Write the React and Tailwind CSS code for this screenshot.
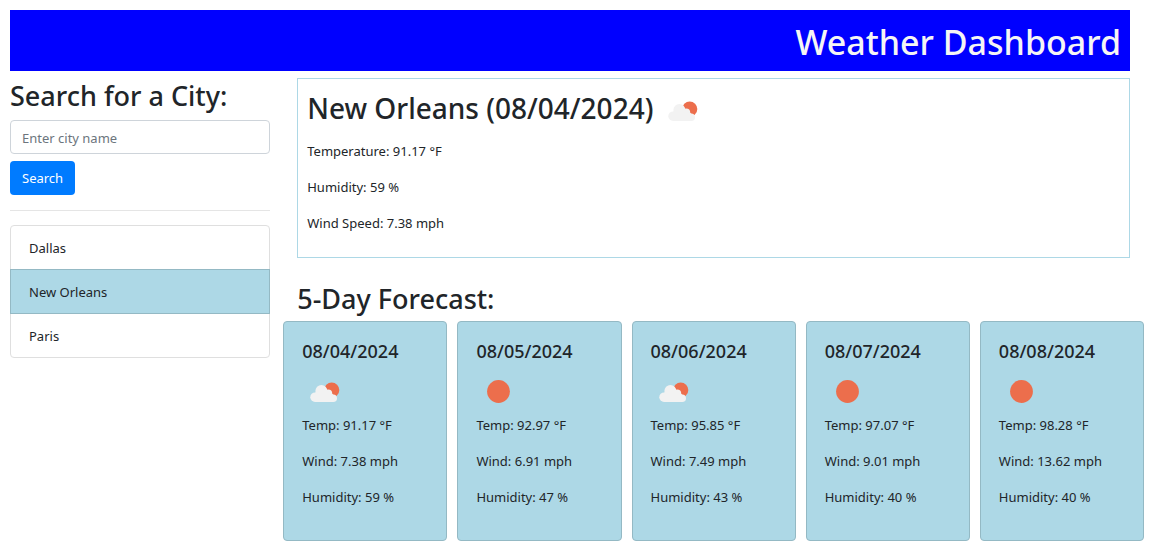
import { useState } from "react";

const cities = ["Dallas", "New Orleans", "Paris"];

const forecast = [
  { date: "08/04/2024", icon: "cloud", temp: "91.17", wind: "7.38", humidity: "59" },
  { date: "08/05/2024", icon: "sun", temp: "92.97", wind: "6.91", humidity: "47" },
  { date: "08/06/2024", icon: "cloud", temp: "95.85", wind: "7.49", humidity: "43" },
  { date: "08/07/2024", icon: "sun", temp: "97.07", wind: "9.01", humidity: "40" },
  { date: "08/08/2024", icon: "sun", temp: "98.28", wind: "13.62", humidity: "40" },
];

function WeatherIcon({ kind }) {
  return (
    <svg viewBox="0 0 44 44" className="size-11 shrink-0" aria-hidden="true">
      {kind === "sun" ? (
        <circle cx="22.5" cy="21.5" r="11.4" fill="#ec6e4c" />
      ) : (
        <>
          <circle cx="29.7" cy="20" r="7.6" fill="#ec6e4c" />
          <g fill="#f2f2f2">
            <circle cx="13.1" cy="27.2" r="4.8" />
            <circle cx="19.4" cy="21" r="6" />
            <circle cx="26.2" cy="23.6" r="4" />
            <circle cx="31.2" cy="28.2" r="3.8" />
            <path d="M13.1 22.4H28.4L31.2 24.4V32H13.1Z" />
          </g>
        </>
      )}
    </svg>
  );
}

export default function App() {
  const [city, setCity] = useState("");
  const [active, setActive] = useState("New Orleans");

  return (
    <div className="pt-[10px] pr-7 pb-[10px] pl-[10px] font-['Noto_Sans','Open_Sans',sans-serif] text-[13px] leading-[22px] text-[#212529]">
      <header className="bg-[#0000ff] px-[9px] pt-[11px] pb-[7px] text-right text-[#f5f5f5]">
        <h1 className="text-[34px] leading-[43px] font-medium">Weather Dashboard</h1>
      </header>

      <div className="grid grid-cols-[5fr_16fr] gap-[27px] pt-[7px]">
        <aside>
          <form onSubmit={(e) => e.preventDefault()}>
            <label htmlFor="city" className="block text-[27px] leading-[36px] font-medium">
              Search for a City:
            </label>
            <input
              id="city"
              type="text"
              placeholder="Enter city name"
              value={city}
              onChange={(e) => setCity(e.target.value)}
              className="mt-[6px] block h-[34px] w-full rounded-[4px] border border-[#ced4da] px-[11px] pt-[2px] placeholder:text-[#6c757d]"
            />
            <button type="submit" className="mt-[7px] block h-[34px] rounded-[4px] bg-[#007bff] px-3 text-white">
              Search
            </button>
          </form>
          <hr className="mt-[15px] mb-[14px] border-black/10" />
          <ul>
            {cities.map((name) => (
              <li key={name} className="group -mt-px first:mt-0">
                <button
                  type="button"
                  onClick={() => setActive(name)}
                  className={
                    "block h-[45px] w-full border px-[18px] text-left group-first:rounded-t-[4px] group-last:rounded-b-[4px] " +
                    (name === active ? "relative border-[#94b9c4] bg-[#add8e6]" : "border-[#dfdfdf] bg-white")
                  }
                >
                  {name}
                </button>
              </li>
            ))}
          </ul>
        </aside>

        <main>
          <section className="border border-[#add8e6] px-[9px] pt-[7px] pb-[9px]">
            <h2 className="flex items-start gap-[7px] text-[28px] leading-[44px] font-medium">
              New Orleans (08/04/2024)
              <span className="pt-[3px]">
                <WeatherIcon kind="cloud" />
              </span>
            </h2>
            <div className="space-y-[14px] pt-[7px] pb-[14px]">
              <p>Temperature: 91.17 °F</p>
              <p>Humidity: 59 %</p>
              <p>Wind Speed: 7.38 mph</p>
            </div>
          </section>

          <h2 className="mt-[23px] text-[27px] leading-[36px] font-medium">5-Day Forecast:</h2>
          <div className="-mx-[14px] mt-1 grid grid-cols-5 gap-[10px]">
            {forecast.map((day) => (
              <article key={day.date} className="rounded-[4px] border border-[#94b9c4] bg-[#add8e6] px-[18px] pt-[18px] pb-[32px]">
                <h3 className="text-[18px] leading-[22px] font-medium">{day.date}</h3>
                <div className="mt-2">
                  <WeatherIcon kind={day.icon} />
                </div>
                <div className="space-y-[14px]">
                  <p>Temp: {day.temp} °F</p>
                  <p>Wind: {day.wind} mph</p>
                  <p>Humidity: {day.humidity} %</p>
                </div>
              </article>
            ))}
          </div>
        </main>
      </div>
    </div>
  );
}
